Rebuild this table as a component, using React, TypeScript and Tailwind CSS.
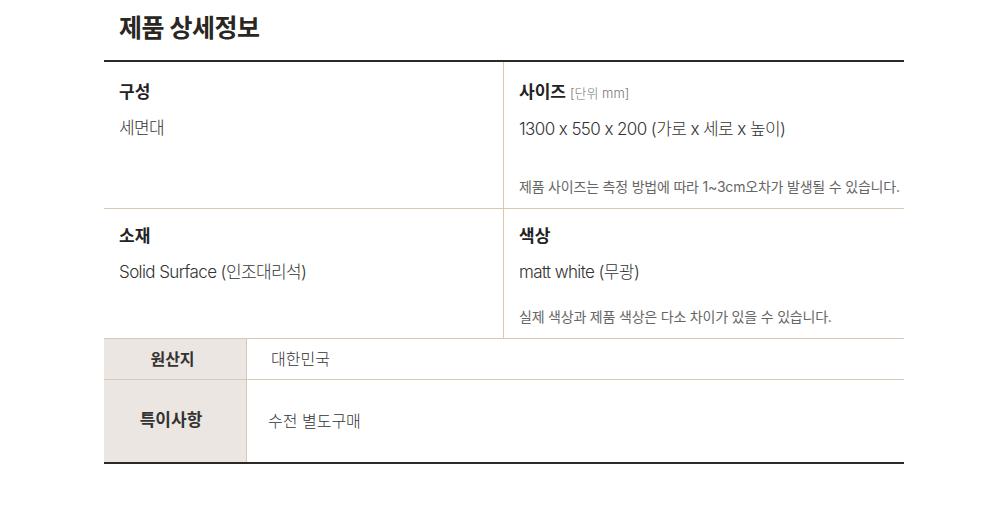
import React from "react";

const font = { fontFamily: 'Inter, "Noto Sans CJK KR", "Noto Sans", sans-serif' };

export default function App() {
  return (
    <div className="w-[1000px] h-[514px] bg-white" style={font}>
      <div className="w-[800px] ml-[104px]">
        <h2 className="pl-[15px] pt-[12px] h-[60px] text-[25px] leading-[32px] font-bold text-[#2a2622] tracking-[-0.5px]">
          제품 상세정보
        </h2>
        <div className="border-t-2 border-[#2e2924]">
          <div className="grid grid-cols-2 border-b border-[#d8c9b3] h-[147px]">
            <div className="border-r border-[#d8c9b3] pl-[15px] pt-[18px]">
              <div className="text-[17px] leading-[24px] font-bold text-[#222]">구성</div>
              <div className="mt-[12px] text-[17px] leading-[24px] font-light text-[#333] tracking-[-0.6px]">세면대</div>
            </div>
            <div className="pl-[15px] pt-[18px] pb-[11px] flex flex-col">
              <div className="text-[17px] leading-[24px] font-bold text-[#222]">
                사이즈 <span className="text-[13px] font-light text-[#777]">[단위 mm]</span>
              </div>
              <div className="mt-[12px] text-[17px] leading-[24px] font-light text-[#333] tracking-[-0.6px]">
                1300 x 550 x 200 (가로 x 세로 x 높이)
              </div>
              <div className="mt-auto text-[14px] leading-[20px] text-[#666] tracking-[-0.2px]">
                제품 사이즈는 측정 방법에 따라 1~3cm오차가 발생될 수 있습니다.
              </div>
            </div>
          </div>
          <div className="grid grid-cols-2 border-b border-[#d8c9b3] h-[130px]">
            <div className="border-r border-[#d8c9b3] pl-[15px] pt-[15px]">
              <div className="text-[17px] leading-[24px] font-bold text-[#222]">소재</div>
              <div className="mt-[12px] text-[17px] leading-[24px] font-light text-[#333] tracking-[-0.6px]">
                Solid Surface (인조대리석)
              </div>
            </div>
            <div className="pl-[15px] pt-[15px] pb-[11px] flex flex-col">
              <div className="text-[17px] leading-[24px] font-bold text-[#222]">색상</div>
              <div className="mt-[12px] text-[17px] leading-[24px] font-light text-[#333] tracking-[-0.6px]">matt white (무광)</div>
              <div className="mt-auto text-[14px] leading-[20px] text-[#666] tracking-[-0.2px]">
                실제 색상과 제품 색상은 다소 차이가 있을 수 있습니다.
              </div>
            </div>
          </div>
          <div className="flex border-b border-[#d8c9b3] h-[41px]">
            <div className="w-[143px] bg-[#ebe6e1] border-r border-[#d8c9b3] flex items-center justify-center pr-[5px] text-[16px] font-bold text-[#333]">
              원산지
            </div>
            <div className="flex-1 flex items-center pl-[24px] text-[16px] font-light text-[#333]">대한민국</div>
          </div>
          <div className="flex h-[84px] border-b-2 border-[#2e2924]">
            <div className="w-[143px] bg-[#ebe6e1] border-r border-[#d8c9b3] flex items-center justify-center pr-[8px] text-[17px] font-bold text-[#333]">
              특이사항
            </div>
            <div className="flex-1 flex items-center pl-[21px] text-[16px] font-light text-[#333]">수전 별도구매</div>
          </div>
        </div>
      </div>
    </div>
  );
}
